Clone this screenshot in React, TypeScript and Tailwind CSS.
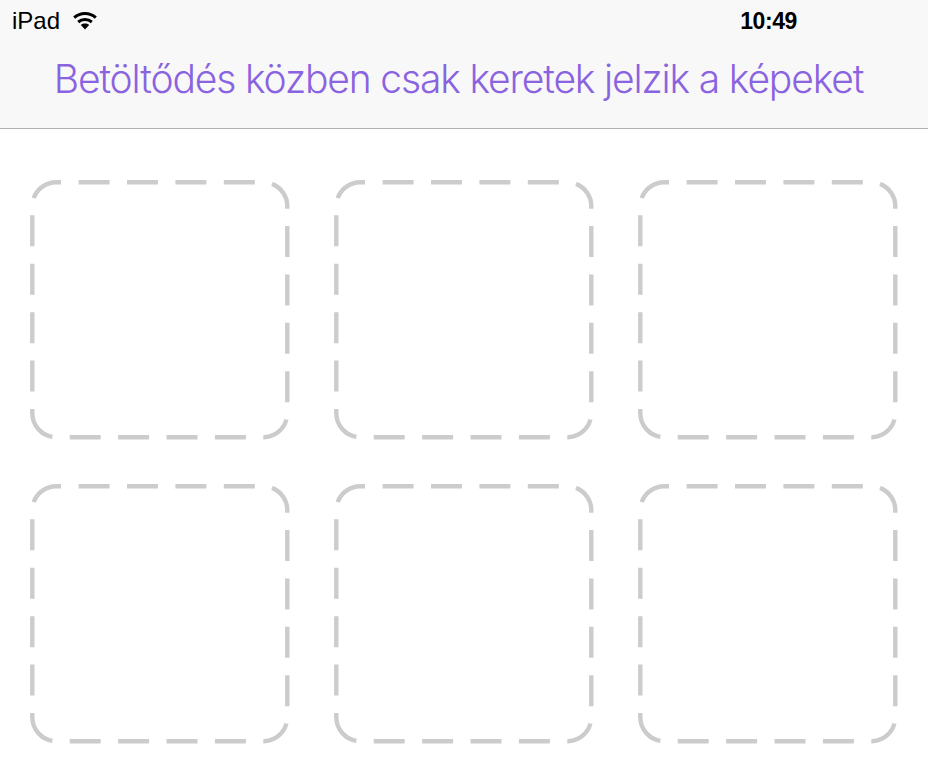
const frames = [0, 1, 2, 3, 4, 5];

// dash lengths around the frame, clockwise from the top-left corner; the
// bottom-left corner dash is longer than the others in the picture
const DASHES = [
  '4.7 17.6',
  ...Array(14).fill('31 17.4'),
  '37.7 17.4',
  ...Array(3).fill('31 17.4'),
  '31 17.4 30.2 40',
].join(' ');

function DashedFrame() {
  return (
    <svg width="260" height="260" viewBox="0 0 260 260" fill="none" className="block">
      <rect
        x="2.3"
        y="2.2"
        width="255"
        height="255"
        rx="24"
        stroke="#cccccc"
        strokeWidth="4.4"
        strokeDasharray={DASHES}
      />
    </svg>
  );
}

function WifiIcon() {
  return (
    <svg width="24" height="20" viewBox="0 0 24 20" fill="none" className="block">
      <path d="M1.2 6.6C7.4 1.1 16.6 1.1 22.8 6.6" stroke="#000" strokeWidth="3" />
      <path d="M5.2 11C9 7.7 15 7.7 18.8 11" stroke="#000" strokeWidth="3" />
      <path d="M7.8 14C10.2 12.1 13.8 12.1 16.2 14L12 18.6z" fill="#000" />
    </svg>
  );
}

export default function App() {
  return (
    <div className="h-[778px] w-[928px] overflow-hidden bg-white font-['Liberation_Sans',sans-serif]">
      <header className="h-[129px] border-b border-[#b2b2b2] bg-[#f8f8f8]">
        <div className="flex h-[41px] items-center justify-between pl-[12px] pr-[131px] text-[24px] text-black">
          <div className="flex items-center gap-[13px]">
            <span>iPad</span>
            <WifiIcon />
          </div>
          <span className="pt-[2px] text-[23px] font-bold tracking-[-0.4px]">10:49</span>
        </div>
        <h1 className="whitespace-nowrap pr-[11px] text-center font-['Inter',sans-serif] text-[39px] leading-[76px] font-light tracking-[-1.15px] text-[#8a63e0]">
          Betöltődés közben csak keretek jelzik a képeket
        </h1>
      </header>
      <main className="grid grid-cols-[260px_260px_260px] gap-[44px] pl-[30px] pt-[51px]">
        {frames.map((f) => (
          <DashedFrame key={f} />
        ))}
      </main>
    </div>
  );
}
